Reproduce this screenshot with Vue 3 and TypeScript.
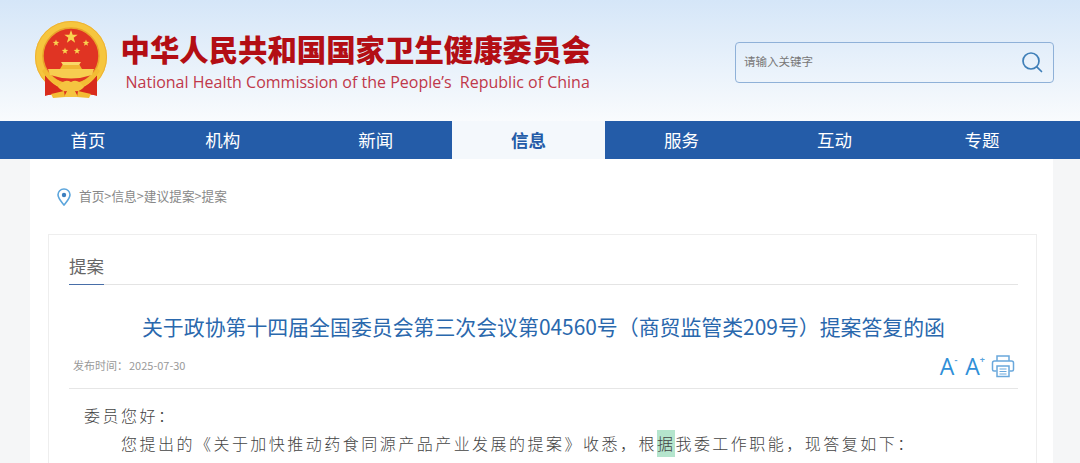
<template>
  <div class="page">
    <header class="header">
      <div class="brand">
        <svg class="emblem" width="76" height="80" viewBox="0 0 76 80">
          <circle cx="37" cy="37" r="36" fill="#f6c63e" />
          <circle cx="37" cy="37" r="35.500" fill="none" stroke="#efb233" stroke-width="1" />
          <circle cx="37" cy="36" r="28" fill="#e03423" stroke="#e9a42a" stroke-width="1.500" />
          <path d="M11 55 L11 76 Q19 73 27 77 L47 77 Q55 73 63 76 L63 55 Q52 70 37 70 Q22 70 11 55 Z" fill="#d92b1c" />
          <path d="M8 51 Q19 68 37 69 Q55 68 66 51 L63 48 Q53 63 37 64 Q21 63 11 48 Z" fill="#f3bc34" />
          <path d="M14 49 H60 L58 55 Q37 62 16 55 Z" fill="#f7cd50" />
          <path d="M29 44 H45 L48 49 H26 Z" fill="#f0b733" />
          <path d="M27 42 H47 L45 45 H29 Z" fill="#f9d868" />
          <path d="M24 67 Q30 58 37 62 Q44 58 50 67 Q46 72 41 71 L44 77 H30 L33 71 Q28 72 24 67 Z" fill="#f5c440" />
          <path d="M17 74 L30 71 L31 77 L19 78 Z M57 74 L44 71 L43 77 L55 78 Z" fill="#f3bc34" />
          <polygon
            v-for="(s, i) in stars"
            :key="i"
            :points="starPoints(s.x, s.y, s.r)"
            fill="#f9d350"
          />
        </svg>
        <div class="brand-text">
          <h1 class="cn-name">中华人民共和国国家卫生健康委员会</h1>
          <div class="en-name">National Health Commission of the People’s&nbsp; Republic of China</div>
        </div>
      </div>
      <div class="search">
        <span class="placeholder">请输入关键字</span>
        <svg width="22" height="22" viewBox="0 0 22 22" fill="none" stroke="#3f7fb8" stroke-width="1.700">
          <circle cx="10" cy="10" r="8" />
          <path d="M15.800 15.800 L20.500 20.500" stroke-linecap="round" />
        </svg>
      </div>
    </header>

    <nav class="nav">
      <div class="nav-inner">
        <a v-for="item in navItems" :key="item" class="nav-item" :class="{ active: item === '信息' }">{{ item }}</a>
      </div>
    </nav>

    <main class="main">
      <div class="crumbs">
        <svg width="14" height="18" viewBox="0 0 14 18">
          <path d="M7 1 C3.500 1 1 3.600 1 6.800 C1 10.500 5 14.500 7 17 C9 14.500 13 10.500 13 6.800 C13 3.600 10.500 1 7 1 Z" fill="none" stroke="#5ba5dc" stroke-width="1.600" />
          <circle cx="7" cy="7" r="2.200" fill="#3d7fbe" />
        </svg>
        <span>首页&gt;信息&gt;建议提案&gt;提案</span>
      </div>

      <section class="card">
        <div class="tab-line"><span class="tab">提案</span></div>
        <h2 class="title">关于政协第十四届全国委员会第三次会议第04560号（商贸监管类209号）提案答复的函</h2>
        <div class="meta">
          <span class="date"><span class="date-label">发布时间：</span>2025-07-30</span>
          <div class="tools">
            <span class="font-btn">A<sup>-</sup></span>
            <span class="font-btn">A<sup>+</sup></span>
            <svg class="printer" width="24" height="24" viewBox="0 0 24 24" fill="none" stroke="#6aa8dc" stroke-width="1.500">
              <path d="M6 7 V2 H18 V7" />
              <path d="M5.500 17 H3 Q1.500 17 1.500 15.500 V9 Q1.500 7 3.500 7 H20.500 Q22.500 7 22.500 9 V15.500 Q22.500 17 21 17 H18.500" />
              <rect x="6" y="12" width="12" height="10.500" />
              <path d="M8.500 15 H15.500 M8.500 17.500 H15.500 M8.500 20 H15.500" stroke-width="1.200" />
            </svg>
          </div>
        </div>
        <div class="content">
          <p>委员您好：</p>
          <p class="indent">您提出的《关于加快推动药食同源产品产业发展的提案》收悉，根<span class="mark">据</span>我委工作职能，现答复如下：</p>
        </div>
      </section>
    </main>
  </div>
</template>

<script setup lang="ts">
const navItems: string[] = ['首页', '机构', '新闻', '信息', '服务', '互动', '专题']

const stars = [
  { x: 37, y: 17, r: 7 },
  { x: 22, y: 23, r: 3.500 },
  { x: 52, y: 23, r: 3.500 },
  { x: 31, y: 31, r: 3.500 },
  { x: 43, y: 31, r: 3.500 },
]

function starPoints(x: number, y: number, r: number): string {
  const pts: string[] = []
  for (let i = 0; i < 10; i++) {
    const rad = i % 2 === 0 ? r : r * 0.4
    const a = (Math.PI / 5) * i - Math.PI / 2
    pts.push(`${(x + rad * Math.cos(a)).toFixed(2)},${(y + rad * Math.sin(a)).toFixed(2)}`)
  }
  return pts.join(' ')
}
</script>

<style>
html,
body {
  margin: 0;
  background: #f5f6f7;
  overflow: hidden;
}
</style>

<style scoped>
.page {
  height: 463px;
  overflow: hidden;
  font-family: "Noto Sans CJK SC", "Noto Sans", sans-serif;
}
.header {
  height: 121px;
  box-sizing: border-box;
  padding: 20px 26px 0 34px;
  display: flex;
  justify-content: space-between;
  align-items: flex-start;
  background: linear-gradient(#d5e6f8, #f9fbfd);
}
.brand {
  display: flex;
}
.emblem {
  flex: none;
}
.brand-text {
  margin-left: 10.500px;
  padding-top: 8px;
}
.cn-name {
  margin: 0;
  font-size: 29.400px;
  line-height: 40px;
  font-weight: 900;
  color: #b30e14;
  white-space: nowrap;
}
.en-name {
  margin: 3px 0 0 5px;
  font-family: "Open Sans", "Noto Sans", sans-serif;
  font-size: 16px;
  line-height: 22px;
  color: #c0384a;
  white-space: nowrap;
}
.search {
  width: 319px;
  height: 41px;
  margin-top: 22px;
  box-sizing: border-box;
  border: 1px solid #8fb1d8;
  border-radius: 4px;
  display: flex;
  align-items: center;
  justify-content: space-between;
  padding: 0 10px 0 8px;
}
.search svg {
  margin-top: -1px;
}
.placeholder {
  font-size: 11.500px;
  line-height: 16px;
  margin-top: -3px;
  color: #777;
}
.nav {
  height: 38px;
  background: #245ca8;
}
.nav-inner {
  width: 1053px;
  height: 38px;
  display: grid;
  grid-template-columns: 146px 153.500px 152.500px 153px 153px 153px 142px;
}
.nav-item {
  display: flex;
  align-items: center;
  justify-content: center;
  padding-bottom: 2px;
  box-sizing: border-box;
  font-size: 17.500px;
  color: #fff;
}
.nav-item:first-child {
  padding-left: 30px;
}
.nav-item.active {
  background: #f4f8fc;
  color: #245ca8;
  font-weight: 700;
}
.main {
  margin-left: 30px;
  width: 1023px;
  height: 304px;
  background: #fff;
  padding: 0 16px 0 18px;
  box-sizing: border-box;
}
.crumbs {
  height: 75px;
  display: flex;
  align-items: center;
  padding-left: 9px;
  box-sizing: border-box;
  font-size: 12.700px;
  color: #888;
}
.crumbs span {
  margin-left: 8px;
  margin-top: -2px;
}
.card {
  border: 1px solid #eeeeee;
  border-bottom: none;
  padding: 0 18px 0 20px;
  height: 229px;
}
.tab-line {
  height: 49px;
  border-bottom: 1px solid #e4e4e4;
  display: flex;
  align-items: flex-end;
}
.tab {
  font-size: 17.500px;
  line-height: 32px;
  height: 34px;
  margin-bottom: -1px;
  color: #666;
  border-bottom: 1px solid #476ea8;
}
.title {
  margin: 0;
  height: 74px;
  display: flex;
  align-items: center;
  justify-content: center;
  padding-top: 8px;
  box-sizing: border-box;
  font-size: 20.900px;
  font-weight: 400;
  color: #2a68ad;
  white-space: nowrap;
}
.meta {
  height: 28px;
  margin-top: 1px;
  padding: 0 3px 0 4px;
  border-bottom: 1px solid #e6e6e6;
  display: flex;
  justify-content: space-between;
  align-items: flex-start;
}
.date {
  font-size: 11px;
  line-height: 16px;
  margin-top: -3px;
  color: #999;
}
.date-label {
  margin-right: 1px;
}
.tools {
  display: flex;
  align-items: center;
  gap: 8px;
  height: 24px;
  margin-top: -6px;
}
.printer {
  margin-left: -2px;
}
.font-btn {
  font-family: "Open Sans", sans-serif;
  font-size: 23px;
  font-weight: 500;
  line-height: 24px;
  color: #2f8fd8;
  display: flex;
  align-items: flex-start;
}
.font-btn sup {
  font-size: 9px;
  font-weight: 700;
  line-height: 12px;
  color: #5aa5de;
  vertical-align: baseline;
}
.content {
  padding: 12px 0 0 15px;
  font-size: 16px;
  line-height: 28px;
  letter-spacing: 2.480px;
  font-weight: 300;
  color: #444;
  white-space: nowrap;
}
.content p {
  margin: 0;
}
.indent {
  text-indent: 37px;
}
.mark {
  display: inline-block;
  text-indent: 0;
  background: #b5e5cd;
  line-height: 27px;
}
</style>
